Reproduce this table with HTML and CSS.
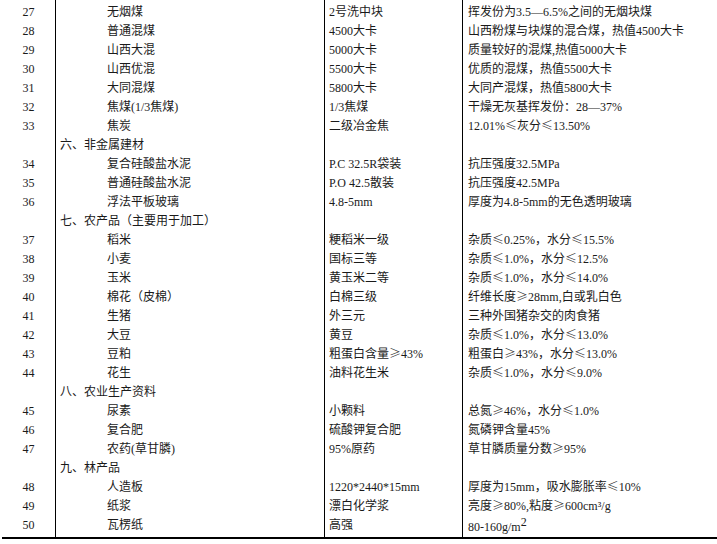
FILE: index.html
```html
<!DOCTYPE html>
<html lang="zh-CN">
<head>
<meta charset="utf-8">
<title>商品规格表</title>
<link rel="stylesheet" href="styles.css">
</head>
<body>
<div class="sheet">
<table class="spec">
<colgroup>
<col class="c-no"><col class="c-name"><col class="c-grade"><col class="c-desc">
</colgroup>
<tbody>
<tr class="first"><td class="no">27</td><td class="item">无烟煤</td><td class="grade">2号洗中块</td><td class="desc">挥发份为3.5—6.5%之间的无烟块煤</td></tr>
<tr><td class="no">28</td><td class="item">普通混煤</td><td class="grade">4500大卡</td><td class="desc">山西粉煤与块煤的混合煤，热值4500大卡</td></tr>
<tr><td class="no">29</td><td class="item">山西大混</td><td class="grade">5000大卡</td><td class="desc">质量较好的混煤,热值5000大卡</td></tr>
<tr><td class="no">30</td><td class="item">山西优混</td><td class="grade">5500大卡</td><td class="desc">优质的混煤，热值5500大卡</td></tr>
<tr><td class="no">31</td><td class="item">大同混煤</td><td class="grade">5800大卡</td><td class="desc">大同产混煤，热值5800大卡</td></tr>
<tr><td class="no">32</td><td class="item">焦煤(1/3焦煤)</td><td class="grade">1/3焦煤</td><td class="desc">干燥无灰基挥发份：28—37%</td></tr>
<tr><td class="no">33</td><td class="item">焦炭</td><td class="grade">二级冶金焦</td><td class="desc">12.01%<span class="sym">≤</span>灰分<span class="sym">≤</span>13.50%</td></tr>
<tr><td class="no"></td><td class="section">六、非金属建材</td><td class="grade"></td><td class="desc"></td></tr>
<tr><td class="no">34</td><td class="item">复合硅酸盐水泥</td><td class="grade">P.C 32.5R袋装</td><td class="desc">抗压强度32.5MPa</td></tr>
<tr><td class="no">35</td><td class="item">普通硅酸盐水泥</td><td class="grade">P.O 42.5散装</td><td class="desc">抗压强度42.5MPa</td></tr>
<tr><td class="no">36</td><td class="item">浮法平板玻璃</td><td class="grade">4.8-5mm</td><td class="desc">厚度为4.8-5mm的无色透明玻璃</td></tr>
<tr><td class="no"></td><td class="section">七、农产品（主要用于加工）</td><td class="grade"></td><td class="desc"></td></tr>
<tr><td class="no">37</td><td class="item">稻米</td><td class="grade">粳稻米一级</td><td class="desc">杂质<span class="sym">≤</span>0.25%，水分<span class="sym">≤</span>15.5%</td></tr>
<tr><td class="no">38</td><td class="item">小麦</td><td class="grade">国标三等</td><td class="desc">杂质<span class="sym">≤</span>1.0%，水分<span class="sym">≤</span>12.5%</td></tr>
<tr><td class="no">39</td><td class="item">玉米</td><td class="grade">黄玉米二等</td><td class="desc">杂质<span class="sym">≤</span>1.0%，水分<span class="sym">≤</span>14.0%</td></tr>
<tr><td class="no">40</td><td class="item">棉花（皮棉）</td><td class="grade">白棉三级</td><td class="desc">纤维长度<span class="sym">≥</span>28mm,白或乳白色</td></tr>
<tr><td class="no">41</td><td class="item">生猪</td><td class="grade">外三元</td><td class="desc">三种外国猪杂交的肉食猪</td></tr>
<tr><td class="no">42</td><td class="item">大豆</td><td class="grade">黄豆</td><td class="desc">杂质<span class="sym">≤</span>1.0%，水分<span class="sym">≤</span>13.0%</td></tr>
<tr><td class="no">43</td><td class="item">豆粕</td><td class="grade">粗蛋白含量<span class="sym">≥</span>43%</td><td class="desc">粗蛋白<span class="sym">≥</span>43%，水分<span class="sym">≤</span>13.0%</td></tr>
<tr><td class="no">44</td><td class="item">花生</td><td class="grade">油料花生米</td><td class="desc">杂质<span class="sym">≤</span>1.0%，水分<span class="sym">≤</span>9.0%</td></tr>
<tr><td class="no"></td><td class="section">八、农业生产资料</td><td class="grade"></td><td class="desc"></td></tr>
<tr><td class="no">45</td><td class="item">尿素</td><td class="grade">小颗料</td><td class="desc">总氮<span class="sym">≥</span>46%，水分<span class="sym">≤</span>1.0%</td></tr>
<tr><td class="no">46</td><td class="item">复合肥</td><td class="grade">硫酸钾复合肥</td><td class="desc">氮磷钾含量45%</td></tr>
<tr><td class="no">47</td><td class="item">农药(草甘膦)</td><td class="grade">95%原药</td><td class="desc">草甘膦质量分数<span class="sym">≥</span>95%</td></tr>
<tr><td class="no"></td><td class="section">九、林产品</td><td class="grade"></td><td class="desc"></td></tr>
<tr><td class="no">48</td><td class="item">人造板</td><td class="grade">1220*2440*15mm</td><td class="desc">厚度为15mm，吸水膨胀率<span class="sym">≤</span>10%</td></tr>
<tr><td class="no">49</td><td class="item">纸浆</td><td class="grade">漂白化学浆</td><td class="desc">亮度<span class="sym">≥</span>80%,粘度<span class="sym">≥</span>600cm³/g</td></tr>
<tr class="last"><td class="no">50</td><td class="item">瓦楞纸</td><td class="grade">高强</td><td class="desc">80-160g/m<sup>2</sup></td></tr>
</tbody>
</table>
</div>
</body>
</html>
```

FILE: styles.css
```css
html, body {
  margin: 0;
  padding: 0;
  background: #ffffff;
}

.sheet {
  width: 717px;
  height: 544px;
  overflow: hidden;
}

.spec {
  margin-left: 2px;
  width: 800px;
  table-layout: fixed;
  border-collapse: separate;
  border-spacing: 0;
  font-family: "Liberation Serif", "Noto Sans CJK SC", serif;
  font-size: 12px;
  line-height: 19px;
  color: #1a1a1a;
}

.c-no { width: 53px; }
.c-name { width: 269px; }
.c-grade { width: 138px; }
.c-desc { width: 340px; }

.spec td {
  padding: 0;
  vertical-align: top;
  white-space: nowrap;
  height: 19px;
  box-sizing: border-box;
}

.spec td + td {
  border-left: 1px solid #000000;
}

.spec .no {
  text-align: center;
}

.spec .section {
  padding-left: 4px;
}

.spec .item {
  padding-left: 51px;
}

.spec .grade {
  padding-left: 4px;
}

.spec .desc {
  padding-left: 5px;
}

.spec .sym {
  font-family: "Noto Sans CJK SC", sans-serif;
  font-weight: 300;
  line-height: 0;
}

.spec tr.first td {
  padding-top: 3px;
  height: 22px;
}

.spec tr.last td {
  border-bottom: 2px solid #000000;
}

.spec sup {
  font-size: 12px;
  line-height: 13px;
  vertical-align: 5px;
}
```
